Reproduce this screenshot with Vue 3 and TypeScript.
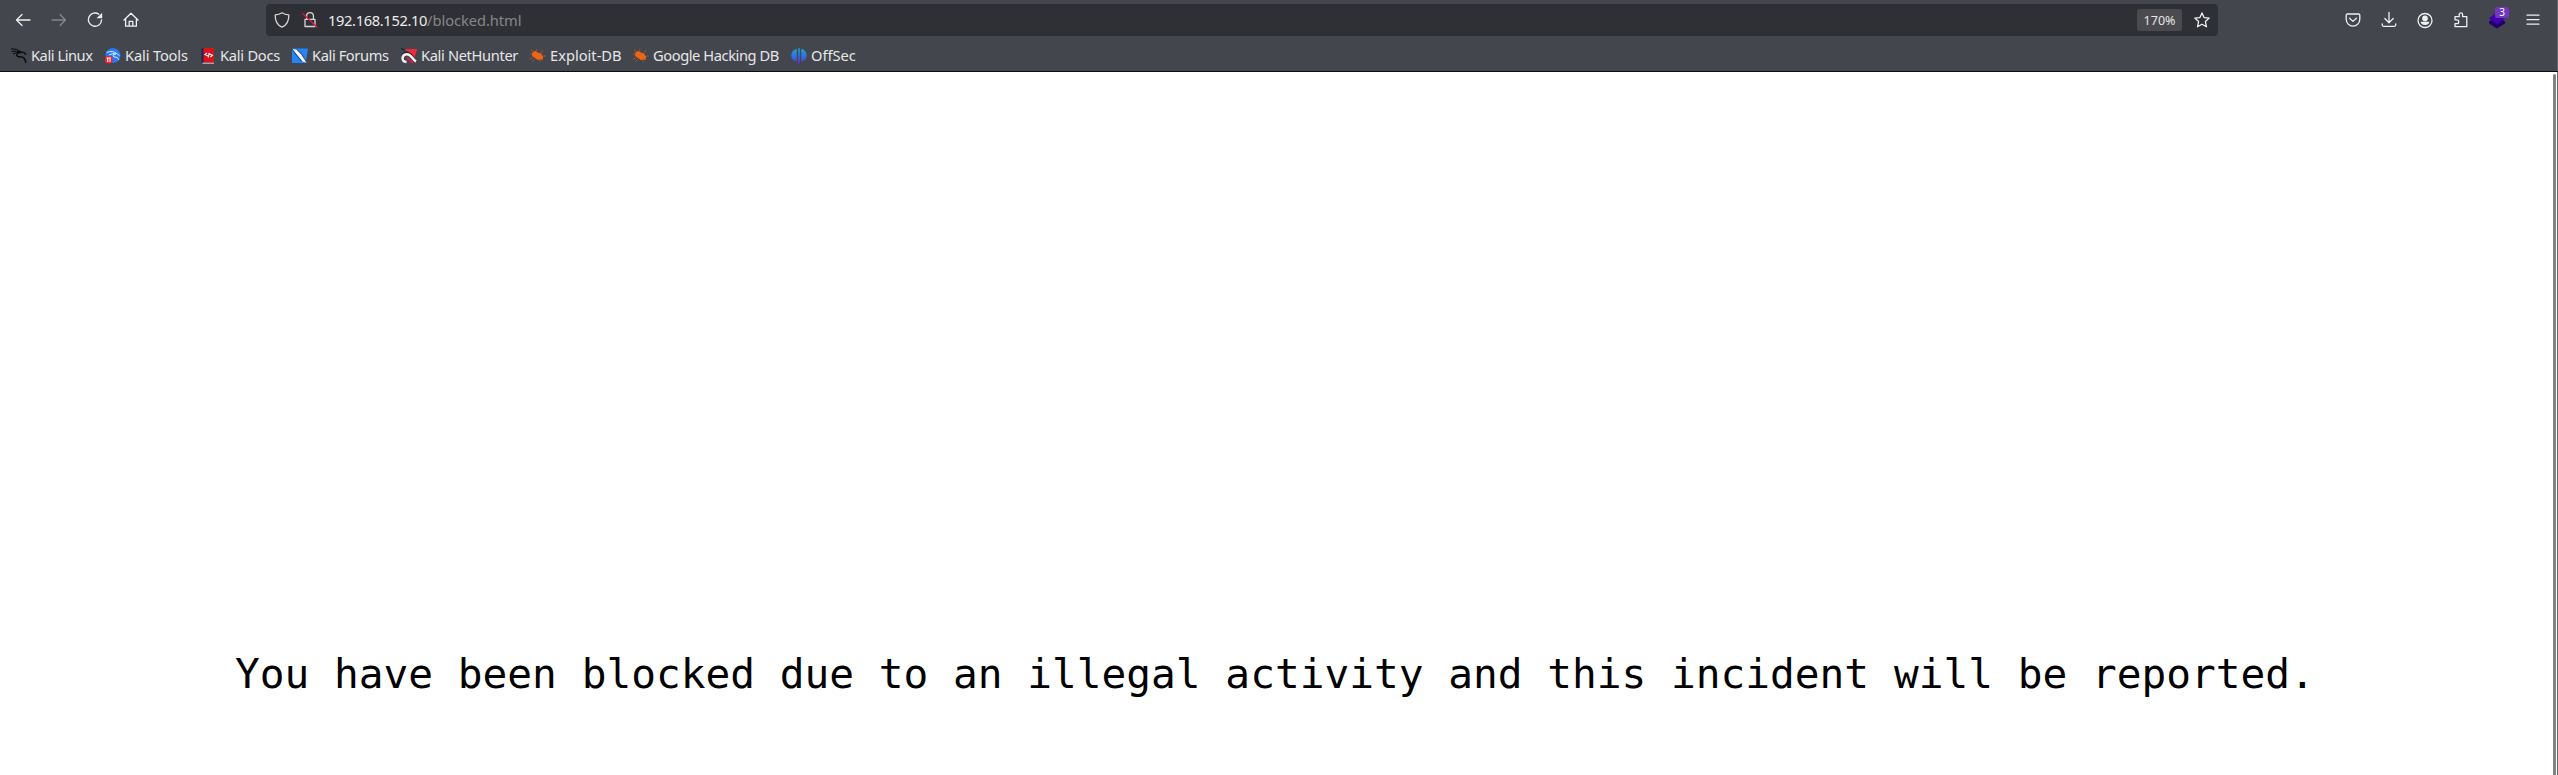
<script setup lang="ts">
interface Bookmark {
  label: string
  icon: 'linux' | 'tools' | 'docs' | 'forums' | 'hunter' | 'exploit' | 'offsec'
  width: number
  tracking: number
}

const bookmarks: Bookmark[] = [
  { label: 'Kali Linux', icon: 'linux', width: 94, tracking: -0.45 },
  { label: 'Kali Tools', icon: 'tools', width: 95, tracking: -0.15 },
  { label: 'Kali Docs', icon: 'docs', width: 92, tracking: -0.25 },
  { label: 'Kali Forums', icon: 'forums', width: 109, tracking: -0.4 },
  { label: 'Kali NetHunter', icon: 'hunter', width: 129, tracking: -0.35 },
  { label: 'Exploit-DB', icon: 'exploit', width: 103, tracking: 0 },
  { label: 'Google Hacking DB', icon: 'exploit', width: 158, tracking: -0.42 },
  { label: 'OffSec', icon: 'offsec', width: 80, tracking: 0 },
]
</script>

<template>
  <div class="window">
    <header class="chrome">
      <div class="toolbar">
        <nav class="nav">
          <svg class="ic" viewBox="0 0 16 16"><path d="M15 8H1.8M7 2.5 1.5 8 7 13.5" /></svg>
          <svg class="ic dim" viewBox="0 0 16 16"><path d="M1 8h13.2M9 2.5 14.5 8 9 13.5" /></svg>
          <svg class="ic" viewBox="0 0 16 16"><path d="M11.8 2.2A6.6 6.6 0 1 0 14.6 8" /><path class="solid" d="M15.2.8v5.4H9.5z" /></svg>
          <svg class="ic" viewBox="0 0 16 16"><path d="M1 8 8 1.3 15 8M2.6 7v7.2h10.8V7M6.2 14V9.3h3.6V14" /></svg>
        </nav>
        <div class="urlbar">
          <svg class="ic shield" viewBox="0 0 16 16"><path d="M8 .8c2 1.4 4.2 2 6.8 2.1C15 8.5 12.5 13 8 15.2 3.5 13 1 8.5 1.2 2.9 3.8 2.8 6 2.2 8 .8z" /></svg>
          <svg class="ic lock" viewBox="0 0 16 16"><path d="M3 7.3h10v7.2H3zM4.6 7V4.1a3.4 3.4 0 0 1 6.800 0V7" /><path class="slash" d="M1 1.8 14.8 15" /></svg>
          <span class="url"><span class="host">192.168.152.10</span>/blocked.html</span>
          <span class="zoom">170%</span>
          <svg class="ic" viewBox="0 0 16 16"><path d="m8 .9 2.1 4.7 5.1.5-3.8 3.5 1.1 5.2L8 12.2l-4.500 2.6 1.100-5.200L.8 6.100l5.100-.5z" /></svg>
        </div>
        <div class="actions">
          <svg class="ic" viewBox="0 0 16 16"><path d="M2.5 2h11q1.300 0 1.300 1.300v4a6.800 6.800 0 0 1-13.600 0v-4Q1.200 2 2.500 2zM4.600 6.200 8 9.400l3.400-3.200" /></svg>
          <svg class="ic" viewBox="0 0 16 16"><path d="M8 .5v10M3.800 6.500 8 10.700l4.200-4.200M1.200 11.800v1q0 1.500 1.500 1.500h10.600q1.500 0 1.500-1.500v-1" /></svg>
          <svg class="ic" viewBox="0 0 16 16"><circle cx="8" cy="8.500" r="7" /><circle class="fill" cx="8" cy="6.400" r="2.800" /><path class="fill" d="M3.600 9.800h8.800q-.6 3.300-4.400 3.300t-4.400-3.300z" /></svg>
          <svg class="ic" viewBox="0 0 16 16"><path d="M2 7.300V4.700h4.200V2.600a1.700 1.700 0 0 1 3.400 0v2.100h4.200v10H2v-3h1.800a1.900 1.900 0 0 0 0-3.900H2z" /></svg>
          <span class="ext">
            <svg viewBox="0 0 16 16"><path d="m0 9.500 8-5 8 5v2L8 16.500 0 11.500z" fill="#21006e" /><path d="M0 6.200 8 0l8 6.200-8 6z" fill="#4500b0" /></svg>
            <span class="badge">3</span>
          </span>
          <svg class="ic" viewBox="0 0 16 16"><path d="M2 3.200h12M2 7.700h12M2 12.200h12" /></svg>
        </div>
      </div>
      <div class="bookmarks">
        <div v-for="b in bookmarks" :key="b.label" class="bookmark" :style="{ width: b.width + 'px', letterSpacing: b.tracking + 'px' }">
          <svg class="fav" viewBox="0 0 16 16">
            <g v-if="b.icon === 'linux'" fill="none" stroke="#090b0c">
              <path d="M0 .8q6-.3 9.500 2.800M.5 3.500q5-1 9 .5M2 6q3-1.500 7-2" stroke-width="1" />
              <path d="m9 3.600 4.500 1.300 1.500 2M10 4.500C4 5 5 9 9 8.800s5.500 2.200 5.800 6.200" stroke-width="1.500" />
            </g>
            <g v-else-if="b.icon === 'tools'">
              <circle cx="8" cy="7.500" r="7.500" fill="#2879f5" />
              <path d="M1.500 4.500q6-2.500 10.500 1.200l2.500 2M4 6.800q4-2 7-.9-5 1-2 2.900 4-.3 5 3.200" fill="none" stroke="#d7eaff" stroke-width="1" />
              <rect x="0" y="8" width="7.500" height="7.500" rx="3" fill="#ed2435" />
              <path d="M1.500 10h4.500M2.800 10v4M5 10v4" stroke="#fff" stroke-width="1" />
            </g>
            <g v-else-if="b.icon === 'docs'">
              <path d="M3 0h11v14.500H3z" fill="#db111b" />
              <path d="M1.500 0h2v15h-2z" fill="#172857" />
              <path d="M2.500 15.200h11.500" stroke="#d8d0d3" stroke-width="1" />
              <path d="M7 5 5 6.700 8 8M10.500 9l2-1.800-3-1.200M9.200 4.800 8.300 9.500" stroke="#fff" fill="none" stroke-width="1.100" />
            </g>
            <g v-else-if="b.icon === 'forums'">
              <path d="M0 .5h16L13.500 15H0z" fill="#2484fa" />
              <path d="m0 1 5 .7 4.500 4.800L15.500 15l-5-1.500-5-6z" fill="#f2f3f4" />
              <path d="m0 1 4.500 6 5 6.200M5 1.500l5 5.300L15 15" fill="none" stroke="#17263d" stroke-width=".8" />
            </g>
            <g v-else-if="b.icon === 'hunter'">
              <path d="M4 1h12l-2.500 10z" fill="#ef283b" />
              <path d="M3 13C-1 8.500 3 4.500 7 5.500S12 12 15 13.500" fill="none" stroke="#20232a" stroke-width="3.500" />
              <path d="M5.500 14C0 13.500.5 6.800 5.500 6.300S10.500 11 15 13.500" fill="none" stroke="#f4f0f2" stroke-width="2.600" />
              <path d="m6 9.500 6 5.500" stroke="#d51e4d" stroke-width="2.200" />
              <path d="M0 .5 4 2" stroke="#17191d" />
            </g>
            <g v-else-if="b.icon === 'exploit'">
              <path d="m2.500 4 3-1 1.500 1L9 5l2 .3 1.300 2.500 1.200 1.500-1 1 .5 1.700-2.500-.5-2.500.5-3-2L2 8z" fill="#ee6412" />
              <path d="M3 3 1 1.500M6 3l1-2M11 5l2-3M13 8h3M3 10l-3 1M5 11l-3 3M9 12l2 2M2 6H0" stroke="#a95830" stroke-width=".8" />
            </g>
            <g v-else>
              <defs><linearGradient id="off" gradientUnits="userSpaceOnUse" x1="0" y1="0" x2="0" y2="16"><stop stop-color="#19a7cf" /><stop offset=".55" stop-color="#306fe0" /><stop offset="1" stop-color="#6525d5" /></linearGradient></defs>
              <path d="M5.800.8v12.700Q.3 12.500.3 7.500T5.800.8zM10.200.8v12.700q5.500-1 5.500-6T10.200.8zM7.200.2h1.600V15.500H7.200z" fill="url(#off)" />
            </g>
          </svg>
          <span class="label">{{ b.label }}</span>
        </div>
      </div>
    </header>
    <main class="page">
      <p class="message">You have been blocked due to an illegal activity and this incident will be reported.</p>
      <div class="scroll" />
      <div class="edge" />
    </main>
  </div>
</template>

<style>
body { margin: 0; background: #fff; overflow: hidden; }
</style>

<style scoped>
.window { width: 2558px; height: 775px; display: flex; flex-direction: column; font-family: "Noto Sans", sans-serif; }
.chrome { box-sizing: border-box; height: 72px; background: #43464d; border-bottom: 1px solid #0c0c14; box-shadow: inset -1px 0 #63666b; }
.toolbar { height: 40px; display: flex; }
.nav { width: 266px; box-sizing: border-box; padding-left: 15px; display: flex; align-items: center; gap: 20px; }
.ic { width: 16px; height: 16px; flex: none; fill: none; stroke: #f0f0f0; stroke-width: 1.3; stroke-linecap: round; stroke-linejoin: round; overflow: visible; }
.dim { stroke: #85878b; }
.fill { fill: #f0f0f0; stroke: none; }
.solid { fill: #f0f0f0; stroke: none; }
.slash { stroke: #df1744; }
.urlbar { width: 1952px; height: 32px; margin-top: 4px; box-sizing: border-box; padding: 0 8px; background: #2f3035; border-radius: 4px; display: flex; align-items: center; }
.lock { margin: 0 10px 0 12px; stroke: #d5d5d5; }
.shield { stroke: #d5d5d5; }
.url { flex: 1; font-size: 14.67px; line-height: 20px; letter-spacing: -0.05px; color: #85868a; white-space: nowrap; }
.host { color: #ececec; letter-spacing: -0.35px; }
.zoom { width: 45px; height: 22px; margin-right: 12px; border-radius: 3px; background: #4b4b4f; color: #e6e6e6; font-size: 12.5px; line-height: 23px; text-align: center; }
.actions { flex: 1; padding: 0 17px 0 127px; display: flex; align-items: center; justify-content: space-between; }
.ext { position: relative; width: 16px; height: 16px; }
.ext svg { display: block; width: 16px; height: 16px; overflow: visible; }
.badge { position: absolute; left: 6px; top: -5px; width: 14px; height: 11px; border-radius: 2px; background: #7137bd; color: #fff; font-size: 10px; line-height: 11px; text-align: center; }
.bookmarks { display: flex; align-items: center; height: 31px; padding-left: 11px; }
.bookmark { display: flex; align-items: center; flex: none; font-size: 14.67px; line-height: 20px; color: #e6e6e8; white-space: nowrap; }
.label { margin-bottom: 2px; }
.fav { width: 16px; height: 16px; margin-right: 4px; flex: none; }
.page { position: relative; flex: 1; background: #fff; display: flex; align-items: flex-end; }
.message { margin: 0 0 77px 235px; font-family: "DejaVu Sans Mono", monospace; font-size: 41.14px; line-height: 48px; color: #000; white-space: pre; }
.scroll { position: absolute; right: 2px; top: 2px; bottom: 0; width: 3px; background: #7f8383; border-radius: 2px 2px 0 0; }
.edge { position: absolute; right: 0; top: 0; bottom: 0; width: 1px; background: #686a6b; }
</style>
